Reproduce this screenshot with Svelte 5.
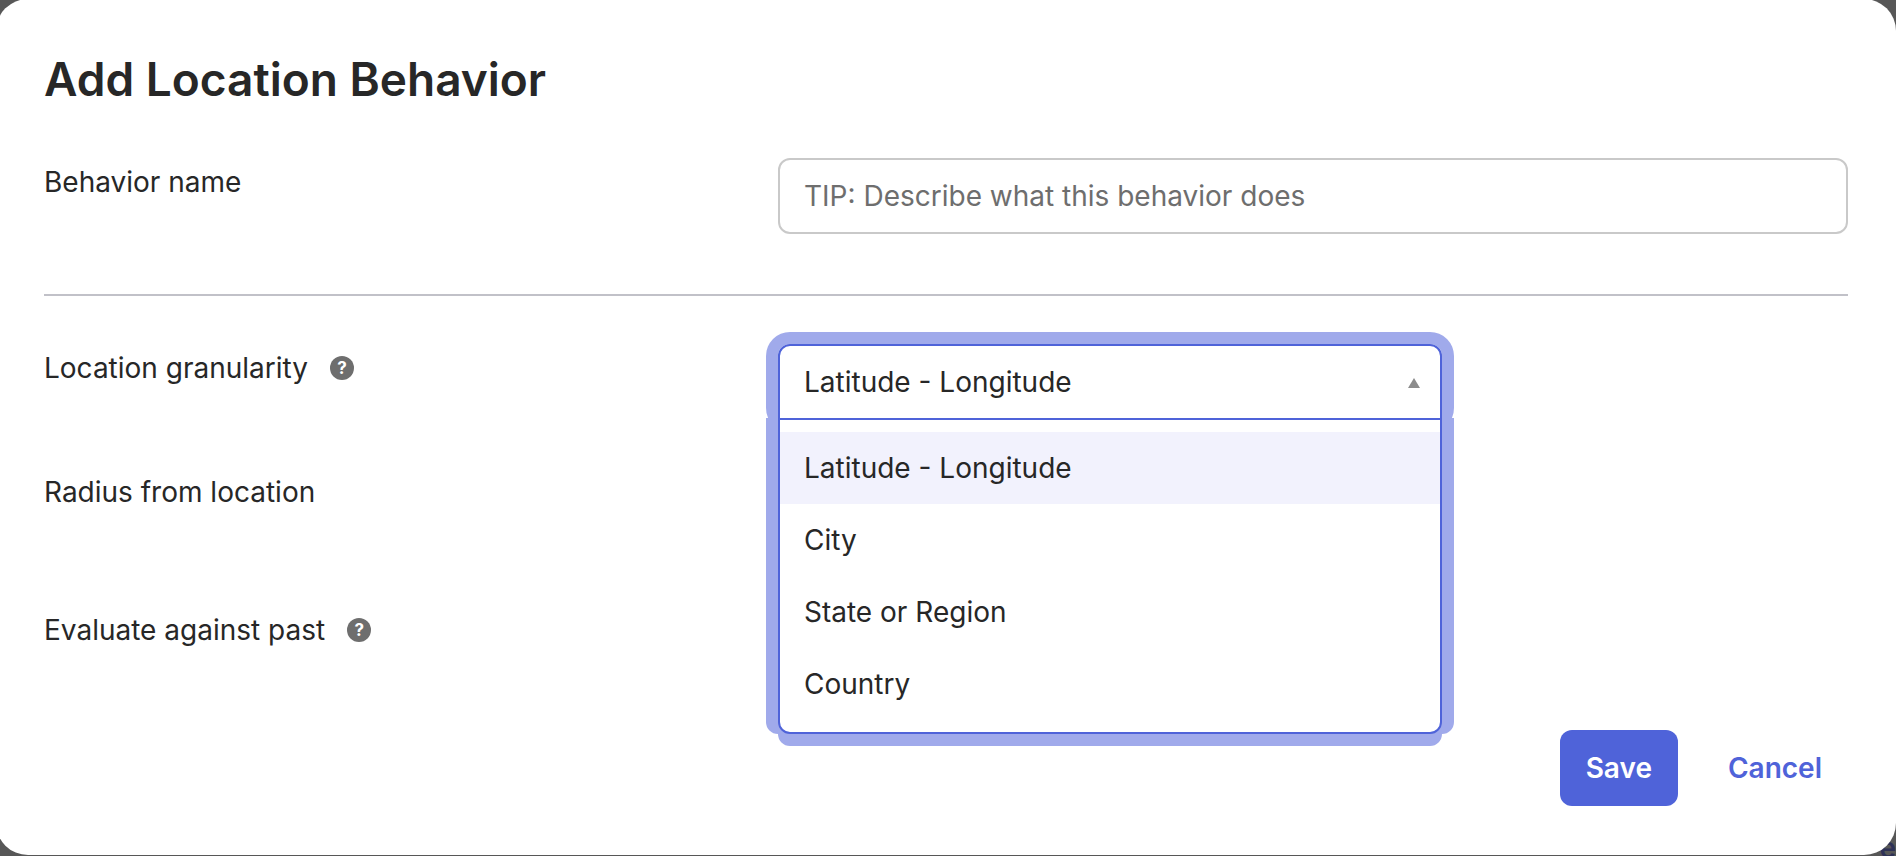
<script lang="ts">
  const options = ['Latitude - Longitude', 'City', 'State or Region', 'Country'];

  let name = '';
  let granularity = options[0];
  let open = true;

  function toggle(event: MouseEvent): void {
    event.preventDefault();
    open = !open;
  }

  function choose(option: string): void {
    granularity = option;
    open = false;
  }
</script>

<div class="backdrop">
  <span class="underlay" aria-hidden="true">e</span>

  <form class="dialog" on:submit|preventDefault>
    <h1>Add Location Behavior</h1>

    <div class="row">
      <label for="behavior-name">Behavior name</label>
      <input
        id="behavior-name"
        type="text"
        bind:value={name}
        placeholder="TIP: Describe what this behavior does"
      />
    </div>

    <hr />

    <div class="row">
      <div class="label">
        <label for="granularity">Location granularity</label>
        <button class="help" type="button" aria-label="About location granularity">?</button>
      </div>
      <div class="select" class:open>
        <select id="granularity" bind:value={granularity} on:mousedown={toggle}>
          {#each options as option}
            <option value={option}>{option}</option>
          {/each}
        </select>
        <svg class="caret" viewBox="0 0 12 10" aria-hidden="true">
          <path d="M6 0 12 10H0Z" />
        </svg>
        {#if open}
          <div class="menu" role="listbox" aria-label="Location granularity">
            {#each options as option}
              <button
                type="button"
                role="option"
                class:selected={option === granularity}
                aria-selected={option === granularity}
                on:click={() => choose(option)}
              >
                {option}
              </button>
            {/each}
          </div>
        {/if}
      </div>
    </div>

    <div class="row radius">
      <div class="label">Radius from location</div>
    </div>

    <div class="row">
      <div class="label">
        Evaluate against past
        <button class="help" type="button" aria-label="About evaluate against past">?</button>
      </div>
    </div>

    <div class="actions">
      <button class="save" type="submit">Save</button>
      <button class="cancel" type="button">Cancel</button>
    </div>
  </form>
</div>

<style>
  :global(body) {
    margin: 0;
    background: #575757;
  }

  .backdrop {
    position: relative;
    overflow: hidden;
    padding-bottom: 1px;
    color: #272727;
    font-family: Inter, 'Liberation Sans', sans-serif;
    font-size: 28px;
    line-height: 48px;
  }

  /* page link left dimmed behind the dialog corner */
  .underlay {
    position: absolute;
    right: 0;
    bottom: -16px;
    color: #2e3156;
    font-weight: 600;
  }

  .dialog {
    position: relative;
    margin: -1px 0 0 -4px;
    padding: 48px 48px 49px;
    border-radius: 32px;
    background: #fff;
  }

  h1 {
    margin: 0 0 47px;
    font-size: 46px;
    font-weight: 600;
    line-height: 64px;
  }

  button,
  input,
  select {
    box-sizing: border-box;
    margin: 0;
    font: inherit;
    color: inherit;
  }

  button {
    border: 0;
    cursor: pointer;
  }

  .row {
    display: grid;
    grid-template-columns: 367fr 535fr;
    align-items: start;
    min-height: 76px;
    margin-bottom: 48px;
  }

  .row.radius {
    min-height: 90px;
  }

  .label {
    display: flex;
    align-items: center;
    gap: 22px;
  }

  .help {
    width: 24px;
    height: 24px;
    padding: 0;
    border-radius: 50%;
    background: #6e6e6e;
    color: #fff;
    font-size: 17px;
    font-weight: 700;
    line-height: 24px;
  }

  input,
  select {
    width: 100%;
    height: 76px;
    padding: 0 24px;
    border: 2px solid #c9c9c9;
    border-radius: 12px;
    background: #fff;
    outline: none;
  }

  input::placeholder {
    color: #6e6e6e;
    opacity: 1;
  }

  hr {
    height: 2px;
    margin: 60px 0 48px;
    border: 0;
    background: #c1c1c8;
  }

  .row:has(+ hr) {
    margin-bottom: 0;
  }

  .select {
    position: relative;
    width: 664px;
    max-width: 100%;
    height: 76px;
    border-radius: 12px;
  }

  select {
    appearance: none;
    cursor: pointer;
  }

  .select.open {
    box-shadow: 0 0 0 12px #a0aaeb;
  }

  .open select {
    border-color: #4f63d9;
    border-radius: 12px 12px 0 0;
  }

  .caret {
    position: absolute;
    top: 34px;
    right: 22px;
    width: 12px;
    height: 10px;
    fill: #8c8c8c;
    pointer-events: none;
  }

  .menu {
    position: absolute;
    top: 74px;
    right: 0;
    left: 0;
    z-index: 1;
    display: grid;
    padding: 12px 0;
    border: 2px solid #4f63d9;
    border-radius: 0 0 12px 12px;
    background: #fff;
    box-shadow:
      -12px 0 #a0aaeb,
      12px 0 #a0aaeb,
      0 12px #a0aaeb;
  }

  .menu button {
    height: 72px;
    padding: 0 24px;
    background: transparent;
    text-align: left;
  }

  .menu .selected {
    background: #f2f2fd;
  }

  .actions {
    display: flex;
    justify-content: flex-end;
    gap: 24px;
  }

  .actions button {
    height: 76px;
    padding: 0 26px;
    border-radius: 12px;
    font-weight: 600;
  }

  .save {
    background: #4f63d9;
    color: #fff;
  }

  .cancel {
    background: transparent;
    color: #4f63d9;
  }
</style>
